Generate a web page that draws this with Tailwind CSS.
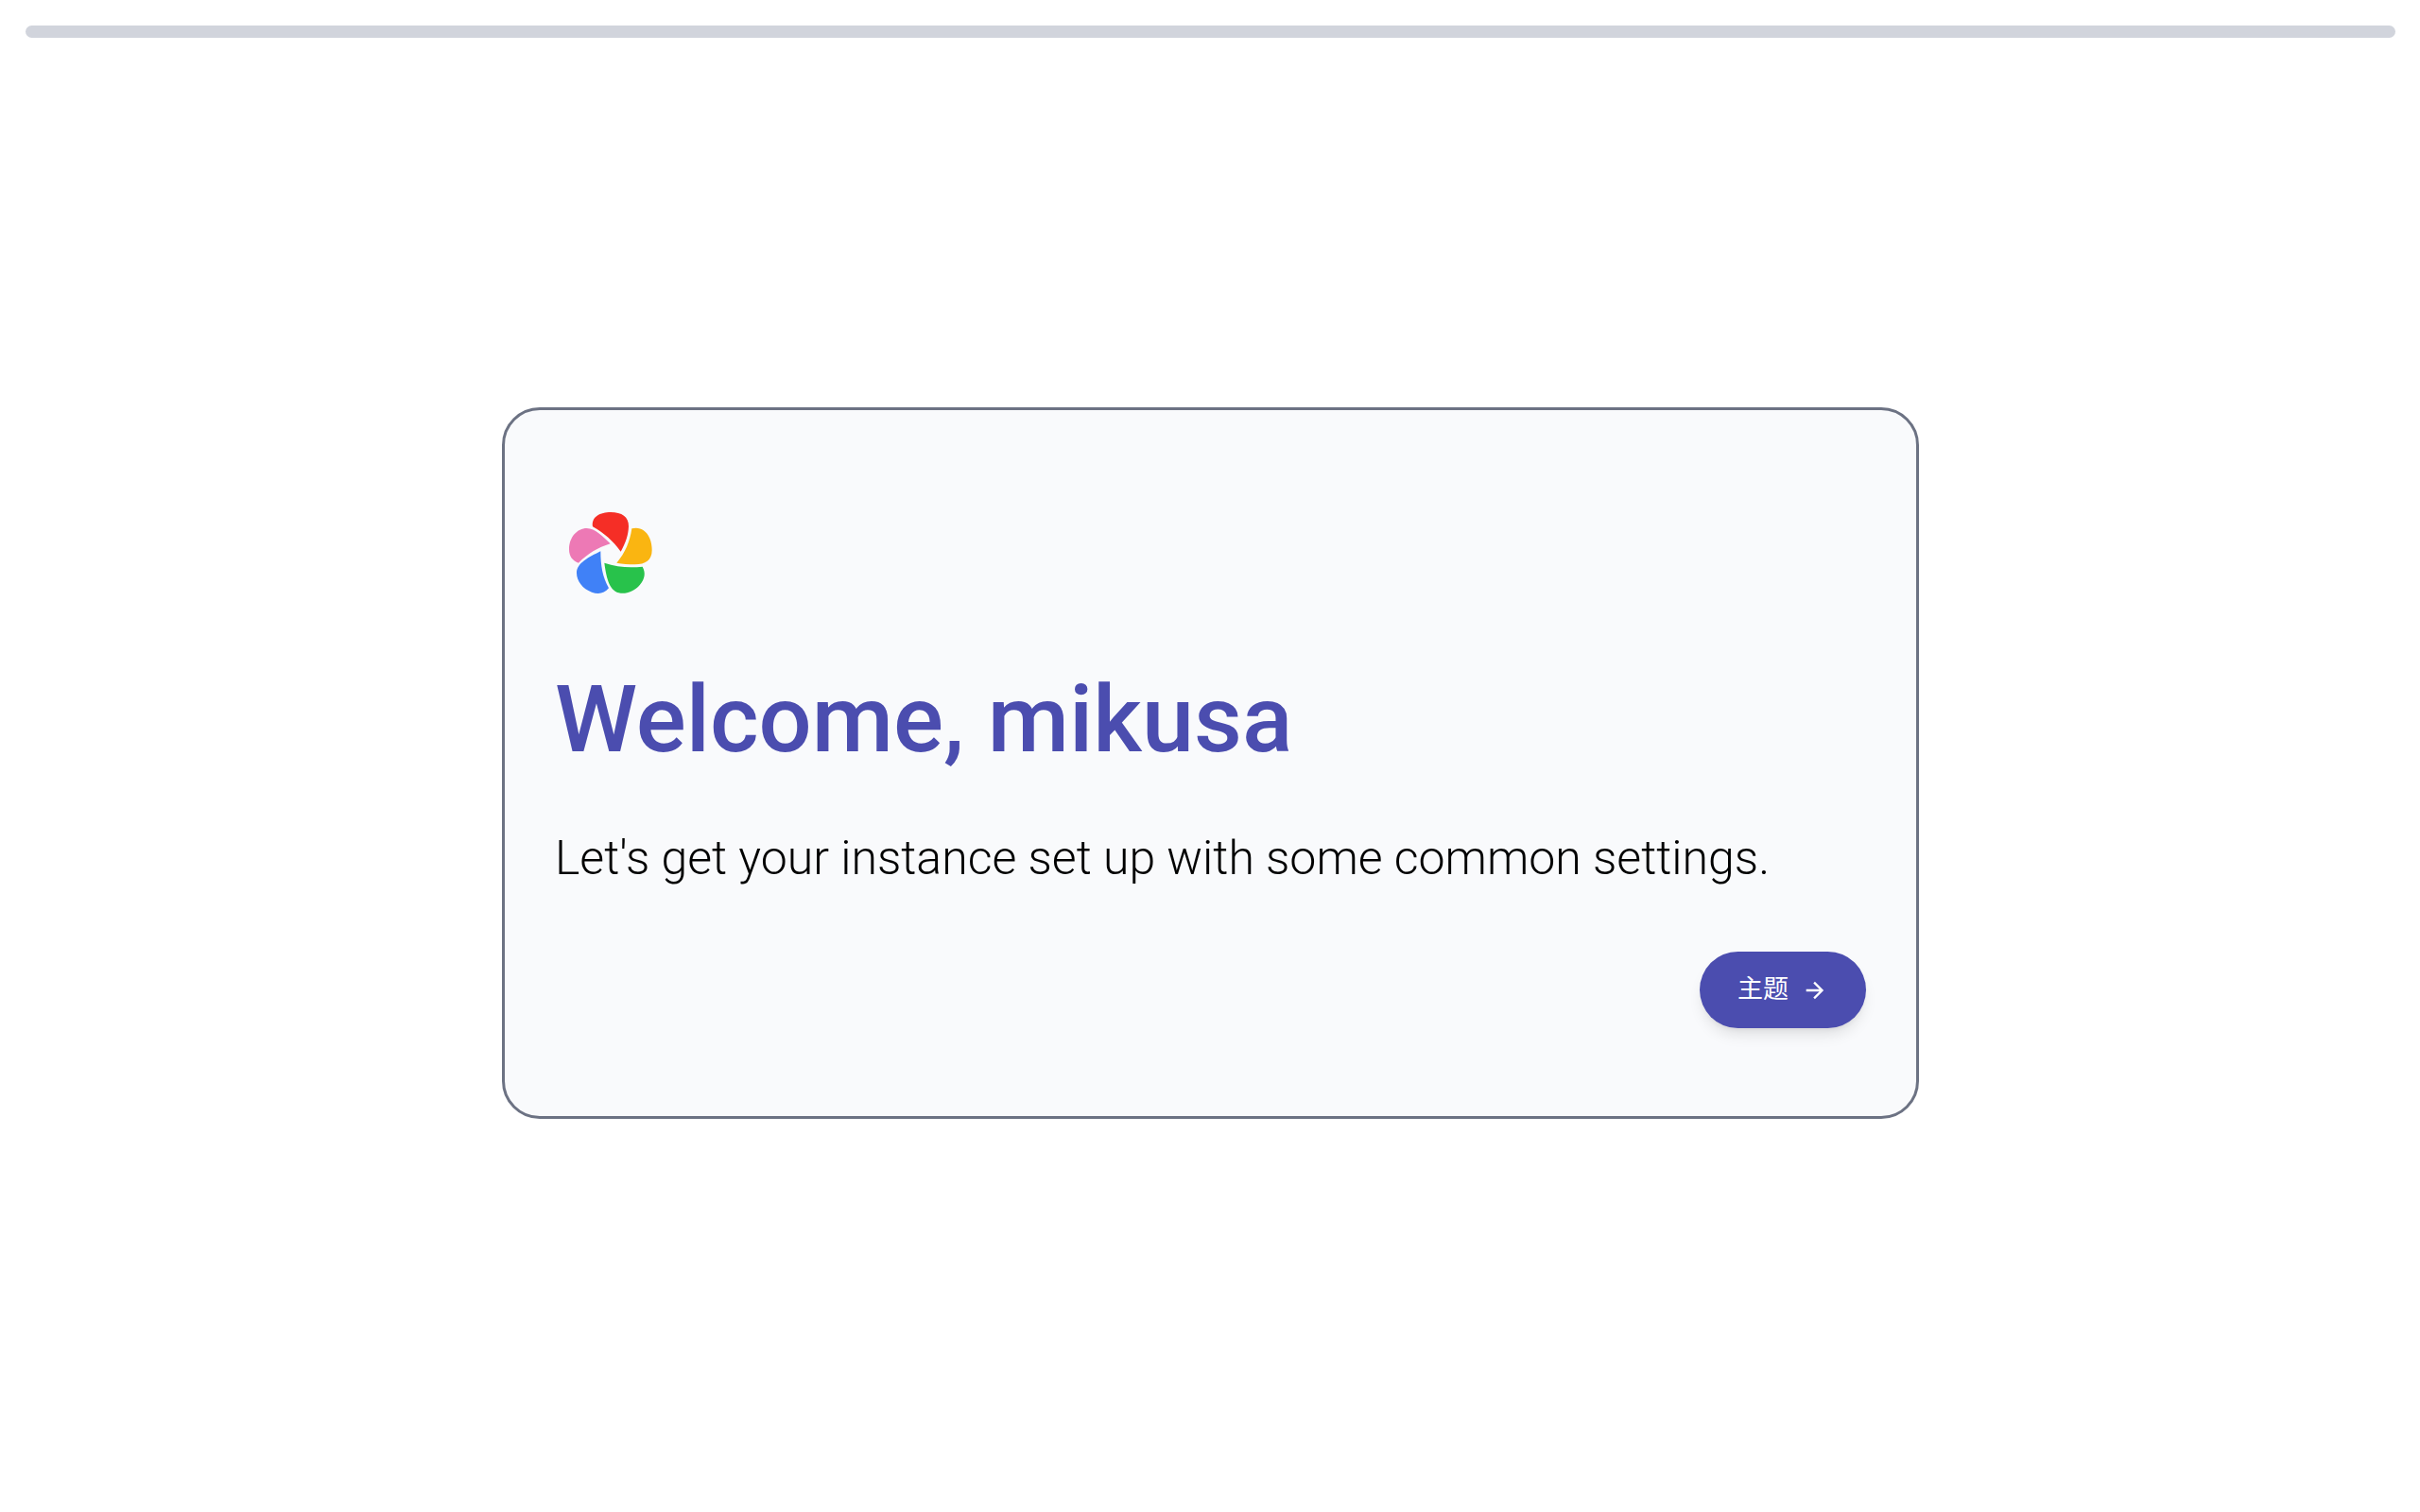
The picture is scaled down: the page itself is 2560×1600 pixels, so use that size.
<!DOCTYPE html>
<html lang="en">
<head>
  <meta charset="UTF-8" />
  <meta name="viewport" content="width=device-width, initial-scale=1" />
  <title>Onboarding</title>
  <script src="https://cdn.jsdelivr.net/npm/@tailwindcss/browser@4"></script>
</head>
<body class="min-h-screen flex flex-col bg-white pt-[27px] pr-[26px] pb-[25px] pl-[27px] font-[Roboto,'Noto_Sans_CJK_SC',sans-serif]">

  <!-- Progress -->
  <div class="h-[13px] w-full shrink-0 rounded-full bg-[#d1d4dc]"></div>

  <main class="flex grow items-center justify-center">
    <section class="w-full max-w-[1499px] rounded-[40px] border-3 border-[#6c7283] bg-[#f9fafc] px-[53px] pt-[91px] pb-[93px]">
      <!-- Logo -->
      <svg class="size-[120px]" viewBox="-9 -15 360 360" aria-hidden="true">
        <path fill="#f52e26" d="M111 82C106 50 135 36 168 36c35 0 58 15 57 45-1 28-9 52-25 80-25-34-54-60-89-79Z" />
        <path fill="#fab511" d="M235 88c24-6 45 4 57 31 5 12 7 25 7 38 0 32-21 45-54 45-21 0-39-1-58-5 27-32 42-67 48-109Z" />
        <path fill="#ed79b5" d="M66 197c-19-6-30-21-30-43 0-39 26-67 56-67 27 0 52 28 75 49-40 12-72 32-101 61Z" />
        <path fill="#4081f7" d="M136 160c0 45 6 82 26 117-14 18-34 20-54 13-29-10-48-36-48-61 0-31 38-50 76-69Z" />
        <path fill="#28c24b" d="M148 197c40 14 79 16 121 12 11 20 7 39-8 57-17 20-40 29-61 27-35-4-45-45-52-96Z" />
      </svg>

      <h1 class="mt-[66px] text-[99px] leading-[100px] font-medium text-[#4b4daf]">Welcome, mikusa</h1>
      <p class="mt-[67px] text-[50px] leading-[60px] font-[350] text-black">Let's get your instance set up with some common settings.</p>

      <div class="mt-[69px] flex justify-end">
        <button type="button" class="flex h-[81px] items-center gap-[14px] rounded-full bg-[#4b4daf] px-10 text-[27px] text-white shadow-lg hover:bg-[#4b4daf]/90">
          主题
          <svg class="size-7" viewBox="0 0 24 24" fill="currentColor" aria-hidden="true">
            <path d="M4 11v2h12l-5.500 5.500 1.420 1.420L19.840 12l-7.920-7.920L10.500 5.500 16 11H4Z" />
          </svg>
        </button>
      </div>
    </section>
  </main>

</body>
</html>
